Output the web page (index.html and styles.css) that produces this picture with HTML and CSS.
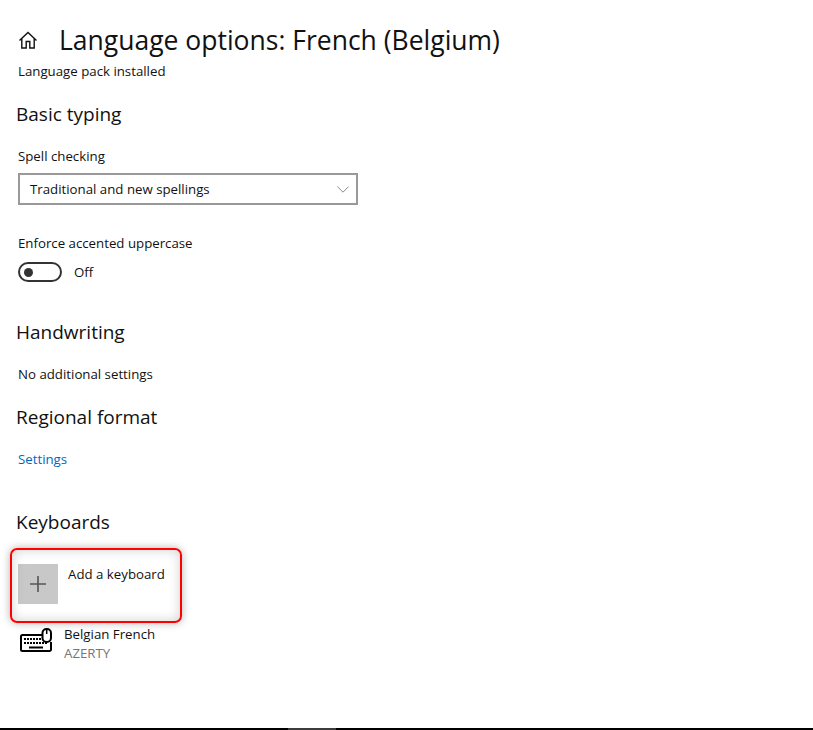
FILE: index.html
```html
<!DOCTYPE html>
<html lang="en">
<head>
  <meta charset="UTF-8" />
  <title>Language options</title>
  <link rel="stylesheet" href="styles.css">
</head>
<body>

  <div class="page">
    <div class="title-row">
      <svg class="home-icon" width="20" height="20" viewBox="0 0 20 20" fill="none" stroke="#111" stroke-width="1.4">
        <path d="M1.500 10.500 10 2.500l8.500 8" />
        <path d="M3.800 8.500V18h4.400v-6.500h3.600V18h4.400V8.500" />
      </svg>
      <h1>Language options: French (Belgium)</h1>
    </div>
    <p class="status">Language pack installed</p>

    <h2 class="basic-head">Basic typing</h2>
    <p class="label">Spell checking</p>
    <div class="select">
      <span>Traditional and new spellings</span>
      <svg width="12" height="7" viewBox="0 0 12 7" fill="none" stroke="#888" stroke-width="1">
        <path d="M.4.6 6 6.200 11.600.6" />
      </svg>
    </div>

    <p class="label accent-label">Enforce accented uppercase</p>
    <div class="toggle-row">
      <div class="toggle"><div class="knob"></div></div>
      <span>Off</span>
    </div>

    <h2 class="hand-head">Handwriting</h2>
    <p class="label none-label">No additional settings</p>

    <h2 class="region-head">Regional format</h2>
    <a class="link" href="#">Settings</a>

    <h2 class="keys-head">Keyboards</h2>
    <div class="add-row">
      <div class="plus-tile">
        <svg width="16" height="16" viewBox="0 0 16 16" stroke="#555" stroke-width="1.6">
          <path d="M8 0v16M0 8h16" />
        </svg>
      </div>
      <span>Add a keyboard</span>
      <div class="callout"></div>
    </div>

    <div class="kbd-row">
      <svg class="kbd-icon" width="32" height="25" viewBox="0 0 32 25" fill="none" stroke="#000" stroke-width="2">
        <path d="M23 7H2.500A1.500 1.500 0 0 0 1 8.500v13A1.500 1.500 0 0 0 2.500 23h27a1.500 1.500 0 0 0 1.500-1.500V14" />
        <rect x="22.500" y="1" width="8.500" height="13" rx="4" fill="#fff" />
        <path d="M26.700 1.500v4.500" stroke-width="1.500" />
        <path d="M4 11h17M4 15h24" stroke-width="2" stroke-dasharray="2 1" />
        <path d="M9 19.500h14" stroke-width="2" />
      </svg>
      <div>
        <div>Belgian French</div>
        <div class="sub">AZERTY</div>
      </div>
    </div>
  </div>

  <div class="bottom-bar"><div class="bar-thumb"></div></div>

</body>
</html>
```

FILE: styles.css
```css
html, body {
  margin: 0;
  padding: 0;
  height: 100%;
  background: #fff;
  color: #111;
  font-family: "Open Sans", "Noto Sans", sans-serif;
  font-size: 13.25px;
  overflow: hidden;
}
body {
  display: flex;
  flex-direction: column;
}
.page {
  flex: 1;
  padding: 23px 0 0 18px;
}
p { margin: 0; }

.title-row {
  display: flex;
  align-items: center;
  gap: 21px;
  height: 34px;
}
h1 {
  margin: 0;
  font-size: 26.5px;
  font-weight: 400;
  line-height: 34px;
}
h2 {
  margin: 0 0 0 -2px;
  font-size: 19px;
  font-weight: 400;
  line-height: 26px;
}
.status { margin-top: 5px; line-height: 18px; }
.label { line-height: 18px; }

.basic-head { margin-top: 21px; }
.basic-head + .label { margin-top: 20px; }
.select {
  margin-top: 8px;
  width: 340px;
  height: 32px;
  box-sizing: border-box;
  border: 2px solid #999;
  padding: 0 7px 0 10px;
  display: flex;
  align-items: center;
  justify-content: space-between;
}
.accent-label { margin-top: 29px; }
.toggle-row {
  margin-top: 10px;
  display: flex;
  align-items: center;
  gap: 12px;
  height: 20px;
}
.toggle {
  width: 44px;
  height: 20px;
  box-sizing: border-box;
  border: 2px solid #333;
  border-radius: 10px;
  display: flex;
  align-items: center;
  padding-left: 4px;
}
.knob {
  width: 9px;
  height: 9px;
  border-radius: 50%;
  background: #333;
}

.hand-head { margin-top: 37px; }
.none-label { margin-top: 20px; }
.region-head { margin-top: 21px; }
.link {
  display: block;
  margin-top: 20px;
  color: #0067c0;
  text-decoration: none;
  line-height: 18px;
}
.keys-head { margin-top: 41px; }

.add-row {
  position: relative;
  margin-top: 29px;
  display: flex;
  gap: 10px;
  height: 40px;
}
.add-row span { margin-top: 1px; line-height: 18px; }
.plus-tile {
  width: 40px;
  height: 40px;
  background: #c8c8c8;
  display: flex;
  align-items: center;
  justify-content: center;
}
.callout {
  position: absolute;
  left: -8px;
  top: -16px;
  width: 172px;
  height: 75px;
  box-sizing: border-box;
  border: 2px solid #f00;
  border-radius: 7px;
  box-shadow: 0 0 9px rgba(0,0,0,0.3), inset 0 0 12px rgba(0,0,0,0.18);
}

.kbd-row {
  margin-top: 21px;
  margin-left: 2px;
  display: flex;
  gap: 12px;
  line-height: 19px;
}
.kbd-icon { margin-top: 3px; }
.sub { color: #767676; }

.bottom-bar {
  height: 2px;
  background: #000;
  position: relative;
}
.bar-thumb {
  position: absolute;
  left: 288px;
  top: 0;
  width: 48px;
  height: 2px;
  background: #3c3c3c;
}
```
